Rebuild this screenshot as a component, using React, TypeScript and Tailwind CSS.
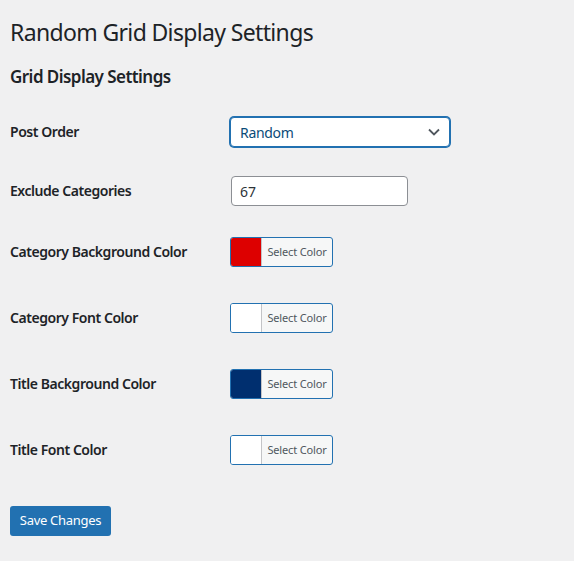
import { FC } from "react";

type ColorRow = { label: string; color: string };

const colorRows: ColorRow[] = [
	{ label: "Category Background Color", color: "#dd0000" },
	{ label: "Category Font Color", color: "#ffffff" },
	{ label: "Title Background Color", color: "#002f6f" },
	{ label: "Title Font Color", color: "#ffffff" },
];

const ColorPicker: FC<{ color: string }> = ({ color }) => (
	<button type="button" className="flex h-[30px] w-[103px] overflow-hidden rounded-[3px] border border-[#2271b1] bg-[#f6f7f7] p-0">
		<span className="h-full w-[31px] shrink-0 border-r border-[#c3c4c7]" style={{ backgroundColor: color }} />
		<span className="flex h-full flex-1 items-center justify-center text-[11px] tracking-[-0.15px] text-[#50575e]">Select Color</span>
	</button>
);

const App: FC = () => {
	return (
		<div className="min-h-[561px] bg-[#f0f0f1] px-[10px] pt-[18px] font-['Noto_Sans',sans-serif] text-[#1d2327]">
			<h1 className="text-[23px] leading-[29px] font-normal tracking-[-0.65px]">Random Grid Display Settings</h1>
			<h2 className="mt-[18px] text-[17px] leading-[24px] font-semibold tracking-[-0.55px]">Grid Display Settings</h2>

			<div className="mt-[12px] flex flex-col">
				{/* Post order */}
				<div className="flex h-[62px] items-center">
					<div className="mb-[2px] w-[220px] shrink-0 text-[14px] font-semibold tracking-[-0.45px]">Post Order</div>
					<div className="relative flex h-[30px] w-[220px] items-center rounded-[4px] border border-[#2271b1] bg-white pl-[9px] shadow-[0_0_0_1px_#2271b1]">
						<span className="text-[14px] tracking-[-0.3px] text-[#0a4b78]">Random</span>
						<svg className="absolute right-[9px] top-[10px]" width="12" height="8" viewBox="0 0 12 8" fill="none">
							<path d="M1 1.5 6 6.5 11 1.5" stroke="#50575e" strokeWidth="1.8" />
						</svg>
					</div>
				</div>

				{/* Exclude categories */}
				<div className="flex h-[56px] items-center">
					<div className="mb-[2px] w-[221px] shrink-0 text-[14px] font-semibold tracking-[-0.45px]">Exclude Categories</div>
					<div className="flex h-[30px] w-[177px] items-center rounded-[4px] border border-[#8c8f94] bg-white pl-[8px] text-[14px] text-[#2c3338]">67</div>
				</div>

				{colorRows.map((row) => (
					<div key={row.label} className="flex h-[66px] items-center">
						<div className="mb-[2px] w-[220px] shrink-0 text-[14px] font-semibold tracking-[-0.45px]">{row.label}</div>
						<ColorPicker color={row.color} />
					</div>
				))}
			</div>

			<button type="button" className="mt-[23px] h-[30px] w-[101px] rounded-[3px] bg-[#2271b1] text-[13px] tracking-[-0.3px] text-white">Save Changes</button>
		</div>
	);
};

export default App;
